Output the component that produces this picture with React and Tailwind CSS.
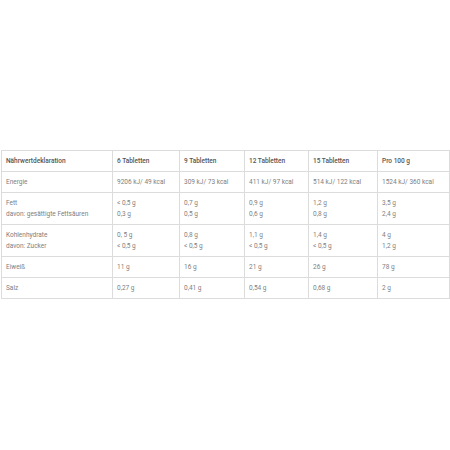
import React from 'react';

const columns = ['Nährwertdeklaration', '6 Tabletten', '9 Tabletten', '12 Tabletten', '15 Tabletten', 'Pro 100 g'];

const rows = [
  [['Energie'], ['9206 kJ/ 49 kcal'], ['309 kJ/ 73 kcal'], ['411 kJ/ 97 kcal'], ['514 kJ/ 122 kcal'], ['1524 kJ/ 360 kcal']],
  [
    ['Fett', 'davon: gesättigte Fettsäuren'],
    ['< 0,5 g', '0,3 g'],
    ['0,7 g', '0,5 g'],
    ['0,9 g', '0,6 g'],
    ['1,2 g', '0,8 g'],
    ['3,5 g', '2,4 g'],
  ],
  [
    ['Kohlenhydrate', 'davon: Zucker'],
    ['0, 5 g', '< 0,5 g'],
    ['0,8 g', '< 0,5 g'],
    ['1,1 g', '< 0,5 g'],
    ['1,4 g', '< 0,5 g'],
    ['4 g', '1,2 g'],
  ],
  [['Eiweiß'], ['11 g'], ['16 g'], ['21 g'], ['26 g'], ['78 g']],
  [['Salz'], ['0,27 g'], ['0,41 g'], ['0,54 g'], ['0,68 g'], ['2 g']],
];

const widths = ['w-[111px]', 'w-[67px]', 'w-[65px]', 'w-[64px]', 'w-[69px]', 'w-[72px]'];

export default function App() {
  return (
    <div className="w-[450px] h-[450px] bg-white pt-[150px] pl-[1px] font-['Roboto',sans-serif]">
      <table className="w-[448px] table-fixed border-collapse text-[6.5px] leading-[11px]">
        <colgroup>
          {widths.map((w, i) => (
            <col key={i} className={w} />
          ))}
        </colgroup>
        <thead>
          <tr>
            {columns.map((c) => (
              <th
                key={c}
                className="border border-[#dcdcdc] px-[4px] py-[4.5px] text-left align-top font-medium text-[#555]"
              >
                {c}
              </th>
            ))}
          </tr>
        </thead>
        <tbody>
          {rows.map((row, r) => (
            <tr key={r}>
              {row.map((cell, i) => (
                <td
                  key={i}
                  className="border border-[#dcdcdc] px-[4px] py-[4.5px] text-left align-top text-[#808080]"
                >
                  {cell.map((line, j) => (
                    <div key={j}>{line}</div>
                  ))}
                </td>
              ))}
            </tr>
          ))}
        </tbody>
      </table>
    </div>
  );
}
